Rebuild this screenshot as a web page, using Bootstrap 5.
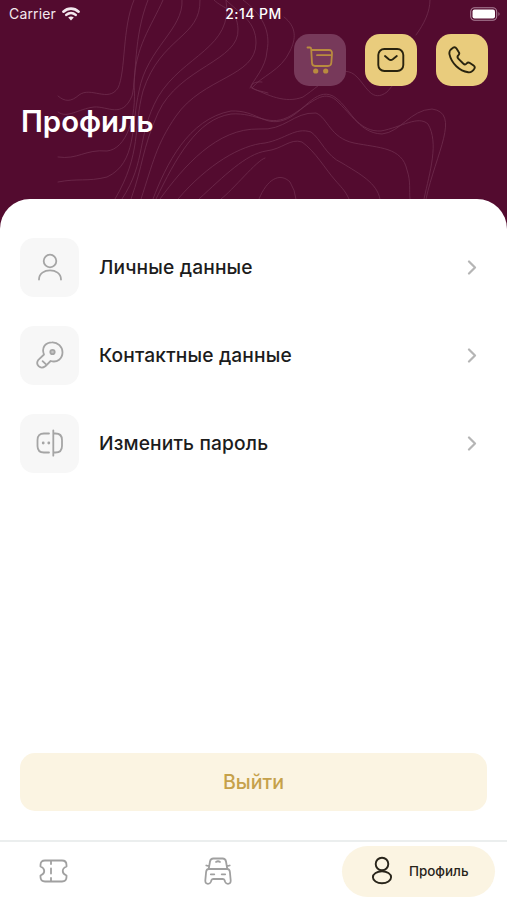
<!DOCTYPE html>
<html lang="ru">
<head>
<meta charset="utf-8">
<meta name="viewport" content="width=device-width, initial-scale=1">
<title>Профиль</title>
<link href="https://cdn.jsdelivr.net/npm/bootstrap@5.3.0/dist/css/bootstrap.min.css" rel="stylesheet">
<style>
body{font-family:Inter,"Liberation Sans",sans-serif;background:#530b2f;color:#1c1c1c}
svg{display:block;fill:none;stroke:currentColor;stroke-linecap:round;stroke-linejoin:round;flex:none}
.screen{height:900px;width:100%;max-width:507px;overflow:hidden}
.hero{height:198.5px}
.contours{position:absolute;left:0;top:0;stroke:#7b3b5b;stroke-width:.8;opacity:.72}
.status{height:27px;padding:0 7px 0 9px;font-size:14px;line-height:27px;color:#f3e8ee}
.carrier{gap:6px;letter-spacing:.15px}
.clock{font-weight:500;font-size:14px;letter-spacing:.45px;color:#fff}
.actions{gap:19px;padding:7px 19px 0 0}
.action{width:52px;height:52px;border-radius:15px;background:#e9cc7d;color:#28230f;padding:0;border:0}
.action.muted{background:#77395a;color:#b98b3f}
.heading{font-size:29.3px;font-weight:600;line-height:36px;color:#fff;margin:18px 0 0 21px}
.sheet{border-radius:30px 30px 0 0;background:#fff;padding:39px 20px 0}
.entry{height:59px;margin-bottom:29px;font-size:19.2px;font-weight:500;letter-spacing:.15px;color:#1c1c1c}
.label{padding-top:1px}
.arrow{color:#b5b5b5;margin-right:9px}
.tile{width:59px;height:59px;border-radius:14px;background:#f7f7f7;color:#a5a5a5;margin-right:20px}
.logout{height:58px;border-radius:15px;background:#fbf4e2;color:#c6a14a;font-size:19.6px;font-weight:500;margin-bottom:29px;border:0;padding-top:3px}
.tabs{height:60.5px;background:#fff;border-top:2px solid #ebeeee;color:#a0a0a0;padding:5px 12px 4px 39px}
.vehicle{margin-left:26px}
.current{width:153px;height:51px;border-radius:26px;background:#fbf4e2;color:#28241a;font-size:13.4px;font-weight:500;padding-left:25px;gap:12px}
</style>
<script src="https://cdn.jsdelivr.net/npm/bootstrap@5.3.0/dist/js/bootstrap.bundle.min.js"></script>
</head>
<body>
<div class="screen d-flex flex-column position-relative">
  <header class="hero flex-shrink-0">
    <svg class="contours" width="507" height="228" viewBox="0 0 507 228">
      <path d="M134 0C122 28 126 71 118 88C108 103 91 86 79 95C71 102 65 102 58 96"/>
      <path d="M148 0C133 38 137 76 132 96C122 119 108 106 94 107C78 109 67 119 58 112"/>
      <path d="M163 0C151 27 135 47 134 84C137 118 126 149 107 151C85 149 78 160 58 157"/>
      <path d="M182 0C184 29 147 48 139 91C131 126 137 163 107 177C87 182 78 178 58 182"/>
      <path d="M200 0C201 38 161 36 143 91C133 128 142 153 115 199"/>
      <path d="M226 0C234 48 183 55 158 97C136 137 147 161 122 199"/>
      <path d="M214 0C224 10 237 8 238 29C240 61 179 67 158 113C142 149 143 166 131 199"/>
      <path d="M226 0C240 14 256 21 256 43C256 77 203 77 176 116C156 145 153 163 141 199"/>
      <path d="M250 88C253 80 266 68 267 51C271 31 262 14 243 0M252 88C268 95 285 104 303 97C324 83 342 61 357 77C367 87 372 103 387 92L393 85"/>
      <path d="M262 82C254 81 250 85 252 88C256 91 262 91 268 93M284 17C297 27 296 39 290 51C281 71 261 76 252 88"/>
      <path d="M153 199C166 165 188 119 231 111C257 110 264 127 284 120C303 114 315 87 333 96C350 106 356 133 382 134C401 132 410 110 432 109C461 113 436 153 426 199"/>
      <path d="M156 199C176 158 197 119 231 114C258 112 269 129 292 115C314 101 323 90 336 100C352 115 361 132 381 131C402 127 418 115 428 124C439 143 430 171 424 199"/>
      <path d="M160 199C184 166 217 128 259 129C285 131 293 112 316 113C328 118 330 138 354 143C379 148 402 147 407 170C411 182 409 190 410 199"/>
      <path d="M178 199C208 164 241 145 265 143C286 139 295 127 311 132C321 139 326 156 342 163C360 174 377 183 380 199"/>
      <path d="M199 199C224 176 246 154 266 151C283 149 290 138 302 142C315 151 326 170 335 180C340 186 345 190 349 199"/>
      <path d="M221 199C233 190 257 160 265 158M259 199C267 179 280 172 290 182Q295 190 296 199"/>
      <path d="M430 0C430 12 424 24 416 35"/>
    </svg>
    <div class="status position-relative d-flex align-items-center justify-content-between">
      <div class="carrier d-flex align-items-center"><span>Carrier</span>
        <svg width="18" height="14" viewBox="0 0 18 14" stroke-width="2.6"><path d="M1.4 4.7C5.8.6 12.2.6 16.6 4.7M4.3 7.9C7.1 5.4 10.9 5.4 13.7 7.9"/><path d="M6.2 10.5Q9 8.4 11.8 10.5L9 13.4Z" fill="currentColor" stroke="none"/></svg>
      </div>
      <span class="clock position-absolute start-50 translate-middle-x">2:14 PM</span>
      <svg width="30" height="14" viewBox="0 0 30 14"><rect x=".7" y=".7" width="26" height="12.6" rx="4" stroke="#ac8299" stroke-width="1.1"/><rect x="2.5" y="2.5" width="22.5" height="9" rx="2" fill="#fff" stroke="none"/><path d="M28.5 5Q30.5 7 28.5 9Z" fill="#ac8299" stroke="none"/></svg>
    </div>
    <div class="actions position-relative d-flex justify-content-end">
      <button class="action muted d-flex align-items-center justify-content-center" aria-label="Корзина"><svg width="28" height="28" viewBox="0 0 28 28" stroke-width="1.8"><path d="M1.5 1.5H4Q5 1.5 5.2 3L6 17Q6.2 20 9 20H22Q25 20 25.3 17L26 8Q26.3 4 23 4H5.5M11 9.2H25.5"/><g fill="currentColor" stroke="none"><circle cx="9.7" cy="25" r="2.6"/><circle cx="19.7" cy="25" r="2.6"/></g></svg></button>
      <button class="action d-flex align-items-center justify-content-center" aria-label="Почта"><svg width="28" height="26" viewBox="0 0 28 26" stroke-width="1.9"><rect x="1.3" y="2" width="25" height="22" rx="6"/><path d="m8 9 3.8 3.2q2 1.5 4 0L19.8 9"/></svg></button>
      <button class="action d-flex align-items-center justify-content-center" aria-label="Телефон"><svg width="28" height="28" viewBox="0 0 28 28" stroke-width="1.9"><path d="M5.1 1.7C2.5 3.2.9 5.5 1.5 8.4C3.5 17.4 11.5 25 20.2 26.3C23.2 26.7 25.3 24.7 26.5 22.4C27 21.3 26.6 20.2 25.6 19.5L21.9 17C20.7 16.2 19.5 16.4 18.6 17.5C17.5 18.8 16.5 18.7 15.2 17.5L10.5 12.8C9.3 11.6 9 10.7 10.2 9.5C11.5 8.4 11.6 7.3 10.7 6L8.5 2.5C7.6 1.2 6.4 1 5.1 1.7Z"/></svg></button>
    </div>
    <h1 class="heading position-relative">Профиль</h1>
  </header>
  <main class="sheet position-relative flex-grow-1 d-flex flex-column">
    <a class="entry d-flex align-items-center text-decoration-none" href="#"><span class="tile d-flex align-items-center justify-content-center"><svg width="28" height="28" viewBox="0 0 28 28" stroke-width="1.8"><circle cx="14" cy="8" r="6.3"/><path d="M3 26.5C3 14.3 25 14.3 25 26.5"/></svg></span><span class="label flex-grow-1">Личные данные</span><svg class="arrow" width="12" height="16" viewBox="0 0 12 16" stroke-width="2.2"><path d="m3 2.5 6 6-6 6"/></svg></a>
    <a class="entry d-flex align-items-center text-decoration-none" href="#"><span class="tile d-flex align-items-center justify-content-center"><svg width="28" height="28" viewBox="0 0 28 28" stroke-width="1.8"><path d="M8 13.5C5 6 10 1.3 16 1.3A10 10 0 0 1 26.5 11.3C26.5 17.5 21.5 22 14.6 20L9.3 25.3Q5.5 28 2.6 25.2Q-.2 22.4 2.4 18.8Z"/><circle cx="16.5" cy="11" r="2.2" fill="#c5c5c5"/><path d="m6.6 20.2 3.2 3"/></svg></span><span class="label flex-grow-1">Контактные данные</span><svg class="arrow" width="12" height="16" viewBox="0 0 12 16" stroke-width="2.2"><path d="m3 2.5 6 6-6 6"/></svg></a>
    <a class="entry d-flex align-items-center text-decoration-none" href="#"><span class="tile d-flex align-items-center justify-content-center"><svg width="28" height="28" viewBox="0 0 28 28" stroke-width="1.8"><path d="M13 4.5H8Q1.5 4.5 1.5 11V17Q1.5 23.5 8 23.5H13M17.3 1.3V26.7M17.3 4.5H19.5Q26 4.5 26 11V17Q26 23.5 19.5 23.5H17.3"/><g fill="currentColor" stroke="none"><circle cx="7.2" cy="14" r="1.4"/><circle cx="12.8" cy="14" r="1.4"/></g></svg></span><span class="label flex-grow-1">Изменить пароль</span><svg class="arrow" width="12" height="16" viewBox="0 0 12 16" stroke-width="2.2"><path d="m3 2.5 6 6-6 6"/></svg></a>
    <button class="logout w-100 mt-auto">Выйти</button>
  </main>
  <nav class="tabs position-relative flex-shrink-0 d-flex align-items-center justify-content-between">
    <svg width="29" height="24" viewBox="0 0 29 24" stroke-width="1.8"><path d="M6 1.5H23C26 1.5 27.5 3.2 27.5 6V7.5C22.5 9.5 22.5 14.5 27.5 16.5V18C27.5 20.8 26 22.5 23 22.5H6C3 22.5 1.5 20.8 1.5 18V16.5C6.5 14.5 6.5 9.5 1.5 7.5V6C1.5 3.2 3 1.5 6 1.5ZM12 2V5M12 9.5V14.5M12 19V22"/></svg>
    <svg class="vehicle" width="28" height="28" viewBox="0 0 28 28" stroke-width="1.8"><path d="M4.7 12 6 4.5Q6.6 1.5 9.4 1.5H18.6Q21.4 1.5 22 4.5L23.3 12M4.7 12H23.3Q25.6 12 25.9 15L26.7 23.5Q26.8 26.8 24 26.8Q22 26.8 21.2 25L20.5 23Q20.1 22 18.8 22H9.2Q7.9 22 7.5 23L6.8 25Q6 26.8 4 26.8Q1.2 26.8 1.3 23.5L2.1 15Q2.4 12 4.7 12ZM2.3 8.5 4.9 9.2M25.7 8.5 23.1 9.2M6.8 17.3H10.3M17.7 17.3H21.2M12 4.9Q14 3.6 16 4.9"/></svg>
    <a class="current d-flex align-items-center text-decoration-none" href="#"><svg width="30" height="30" viewBox="0 0 30 30" stroke-width="1.9"><circle cx="15" cy="8" r="6.3"/><ellipse cx="15" cy="21.3" rx="9.1" ry="6"/></svg><span>Профиль</span></a>
  </nav>
</div>
</body>
</html>
